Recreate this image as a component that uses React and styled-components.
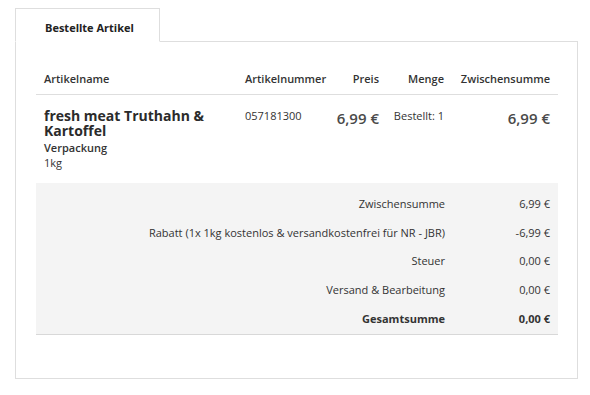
import React from 'react'
import styled, { createGlobalStyle } from 'styled-components'

const GlobalStyle = createGlobalStyle`
  body {
    margin: 0;
    background: #fff;
    font-family: "Open Sans", "Liberation Sans", sans-serif;
    color: #333;
  }
`

const items = [
  {
    id: 1,
    name: 'fresh meat Truthahn & Kartoffel',
    optionLabel: 'Verpackung',
    optionValue: '1kg',
    sku: '057181300',
    price: '6,99 €',
    qty: 'Bestellt: 1',
    subtotal: '6,99 €',
  },
]

const totals = [
  { label: 'Zwischensumme', value: '6,99 €' },
  { label: 'Rabatt (1x 1kg kostenlos & versandkostenfrei für NR - JBR)', value: '-6,99 €' },
  { label: 'Steuer', value: '0,00 €' },
  { label: 'Versand & Bearbeitung', value: '0,00 €' },
  { label: 'Gesamtsumme', value: '0,00 €', strong: true },
]

function App() {
  return (
    <>
      <GlobalStyle />
      <StPage>
        <StTab>Bestellte Artikel</StTab>
        <StPanel>
          <StGrid>
            <StHead>Artikelname</StHead>
            <StHead>Artikelnummer</StHead>
            <StHead $right>Preis</StHead>
            <StHead $right>Menge</StHead>
            <StHead $right>Zwischensumme</StHead>
          </StGrid>
          {items.map((item) => (
            <StGrid key={item.id}>
              <StCell>
                <StName>{item.name}</StName>
                <StOptionLabel>{item.optionLabel}</StOptionLabel>
                <StOptionValue>{item.optionValue}</StOptionValue>
              </StCell>
              <StCell>{item.sku}</StCell>
              <StCell $right><StPrice>{item.price}</StPrice></StCell>
              <StCell $right>{item.qty}</StCell>
              <StCell $right><StPrice>{item.subtotal}</StPrice></StCell>
            </StGrid>
          ))}
          <StTotals>
            {totals.map((row) => (
              <StTotalRow key={row.label} $strong={row.strong}>
                <span>{row.label}</span>
                <span>{row.value}</span>
              </StTotalRow>
            ))}
          </StTotals>
        </StPanel>
      </StPage>
    </>
  )
}

const StPage = styled.div`
  padding: 8px 12px 0 15px;
`

const StTab = styled.div`
  position: relative;
  z-index: 1;
  width: 145px;
  height: 34px;
  box-sizing: border-box;
  margin-bottom: -1px;
  padding: 11px 0 0 29px;
  border: 1px solid #dedede;
  border-bottom: 1px solid #fff;
  background: #fff;
  font-size: 11px;
  font-weight: 700;
  color: #222;
`

const StPanel = styled.div`
  border: 1px solid #dedede;
  padding: 29px 19px 43px 20px;
`

const StGrid = styled.div`
  display: grid;
  grid-template-columns: 201px 93px 57px 65px 106px;
`

const StHead = styled.div`
  padding: 0 8px 8px ${(p) => (p.$right ? '0' : '8px')};
  border-bottom: 1px solid #dedede;
  font-size: 11px;
  font-weight: 600;
  color: #333;
  white-space: nowrap;
  text-align: ${(p) => (p.$right ? 'right' : 'left')};
`

const StCell = styled.div`
  padding: 13px 8px 13px ${(p) => (p.$right ? '0' : '8px')};
  font-size: 11px;
  color: #333;
  white-space: ${(p) => (p.$right ? 'nowrap' : 'normal')};
  text-align: ${(p) => (p.$right ? 'right' : 'left')};
`

const StName = styled.div`
  font-size: 14px;
  font-weight: 700;
  line-height: 15px;
  color: #2b2b2b;
`

const StOptionLabel = styled.div`
  margin-top: 2px;
  font-size: 11px;
  font-weight: 600;
  line-height: 15px;
`

const StOptionValue = styled.div`
  font-size: 11px;
  line-height: 15px;
`

const StPrice = styled.span`
  font-size: 15px;
  font-weight: 600;
  color: #4a4a4a;
`

const StTotals = styled.div`
  background: #f4f4f4;
  border-bottom: 1px solid #d8d8d8;
  padding: 6px 0 1px;
`

const StTotalRow = styled.div`
  display: grid;
  grid-template-columns: 1fr 105px;
  height: 28.75px;
  align-items: center;
  padding-right: 8px;
  font-size: 11px;
  font-weight: ${(p) => (p.$strong ? 700 : 400)};
  color: #333;
  text-align: right;
`

export default App
